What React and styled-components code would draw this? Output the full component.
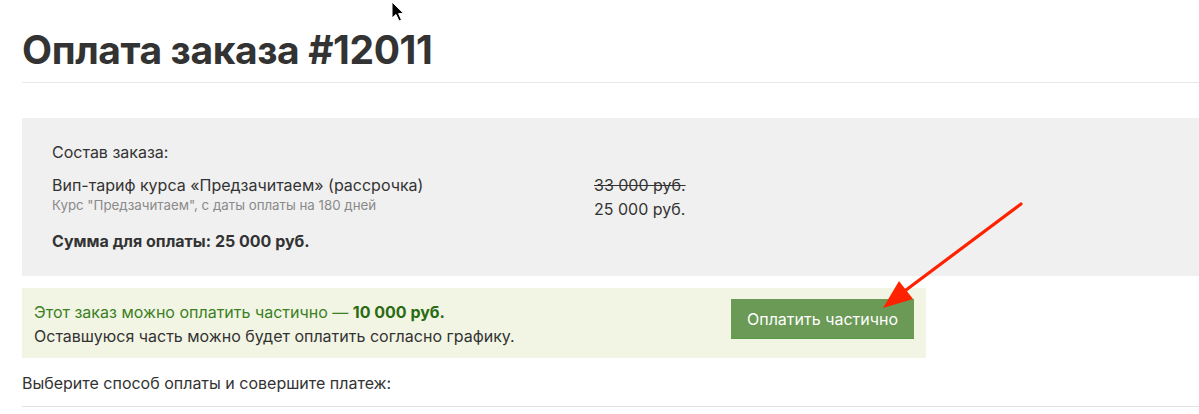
import React from "react";
import styled, { createGlobalStyle } from "styled-components";

const GlobalStyle = createGlobalStyle`
  html, body {
    margin: 0;
    padding: 0;
    background: #ffffff;
    font-family: Inter, "Noto Sans", sans-serif;
    color: #333333;
    overflow: hidden;
  }
`;

const Page = styled.div`
  position: relative;
  width: 1199px;
  height: 414px;
  padding-left: 22px;
  box-sizing: border-box;
`;

const Header = styled.div`
  padding-top: 25px;
  padding-bottom: 7px;
  border-bottom: 1px solid #e8e8e8;
`;

const Title = styled.h1`
  margin: 0;
  font-size: 39px;
  line-height: 50px;
  font-weight: 700;
  color: #333333;
  letter-spacing: -0.4px;
`;

const OrderBox = styled.div`
  margin-top: 35px;
  background: #f0f0f0;
  padding: 24px 30px 25px;
`;

const Label = styled.div`
  font-size: 16px;
  line-height: 20px;
  color: #333;
`;

const ItemRow = styled.div`
  display: grid;
  grid-template-columns: 542px auto;
  margin-top: 11px;
`;

const ItemName = styled.div`
  font-size: 16px;
  line-height: 24px;
  color: #333;
`;

const ItemNote = styled.div`
  font-size: 13.3px;
  line-height: 16px;
  color: #8a8a8a;
`;

const Price = styled.div`
  font-size: 16px;
  line-height: 24px;
  color: #333;
  text-decoration: ${(p) => (p.$old ? "line-through" : "none")};
`;

const Total = styled.div`
  margin-top: 10px;
  font-size: 16px;
  line-height: 20px;
  font-weight: 700;
  color: #333;
`;

const PartialBox = styled.div`
  margin-top: 12px;
  width: 904px;
  box-sizing: border-box;
  background: #f2f5e4;
  padding: 12px 12px 10px;
  display: flex;
  justify-content: space-between;
  align-items: flex-start;
`;

const PartialText = styled.div`
  font-size: 16px;
  line-height: 24px;
`;

const GreenLine = styled.div`
  color: #3a7f22;
  b {
    color: #2a6b12;
    font-weight: 700;
  }
`;

const PayButton = styled.button`
  margin-top: -1px;
  width: 183px;
  height: 40px;
  border: none;
  border-bottom: 1px solid #5c9a46;
  background: #6a9a55;
  color: #ffffff;
  font-family: Inter, "Noto Sans", sans-serif;
  font-size: 16px;
  cursor: pointer;
`;

const Hint = styled.div`
  margin-top: 13px;
  font-size: 16px;
  line-height: 24px;
  color: #333;
`;

const BottomRule = styled.div`
  margin-top: 11px;
  border-top: 1px solid #e3e3e3;
`;

const Overlay = styled.svg`
  position: absolute;
  left: 0;
  top: 0;
  pointer-events: none;
`;

const Arrow = () => (
  <Overlay width="1199" height="414" viewBox="0 0 1199 414">
    <line x1="1021" y1="204" x2="898" y2="296" stroke="#ff2200" strokeWidth="3.2" strokeLinecap="round" />
    <polygon points="883,308 899,281 913,299" fill="#ff2200" />
    <path
      d="M392 2 L392 18 L396 14.5 L399 21 L401.5 20 L398.6 13.6 L403.5 13.3 Z"
      fill="#000"
      stroke="#fff"
      strokeWidth="1"
      strokeLinejoin="round"
    />
  </Overlay>
);

export default function App() {
  return (
    <>
      <GlobalStyle />
      <Page>
        <Header>
          <Title>Оплата заказа #12011</Title>
        </Header>
        <OrderBox>
          <Label>Состав заказа:</Label>
          <ItemRow>
            <div>
              <ItemName>Вип-тариф курса «Предзачитаем» (рассрочка)</ItemName>
              <ItemNote>Курс "Предзачитаем", с даты оплаты на 180 дней</ItemNote>
            </div>
            <div>
              <Price $old>33 000 руб.</Price>
              <Price>25 000 руб.</Price>
            </div>
          </ItemRow>
          <Total>Сумма для оплаты: 25 000 руб.</Total>
        </OrderBox>
        <PartialBox>
          <PartialText>
            <GreenLine>
              Этот заказ можно оплатить частично — <b>10 000 руб.</b>
            </GreenLine>
            <div>Оставшуюся часть можно будет оплатить согласно графику.</div>
          </PartialText>
          <PayButton>Оплатить частично</PayButton>
        </PartialBox>
        <Hint>Выберите способ оплаты и совершите платеж:</Hint>
        <BottomRule />
        <Arrow />
      </Page>
    </>
  );
}
